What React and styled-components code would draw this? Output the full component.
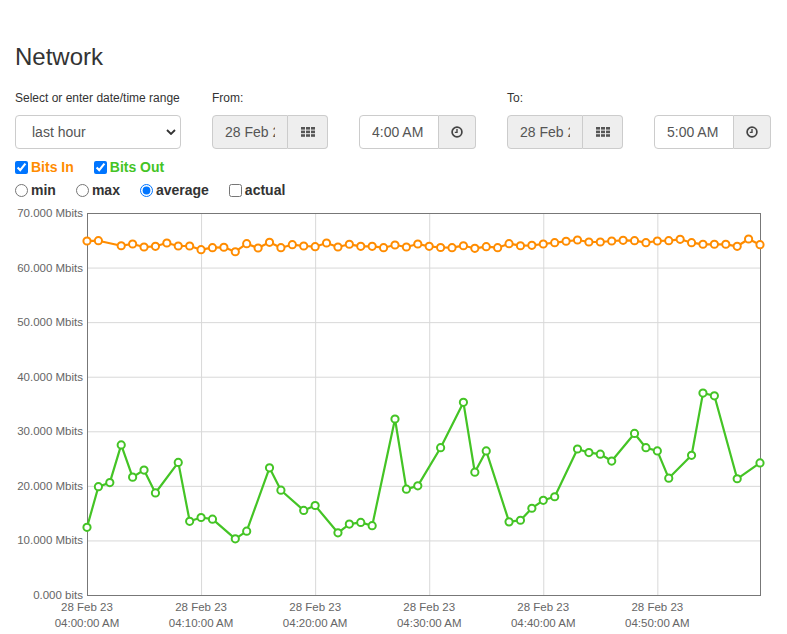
import React from 'react';
import styled, { createGlobalStyle } from 'styled-components';

const GlobalStyle = createGlobalStyle`
  html, body {
    margin: 0;
    padding: 0;
    overflow: hidden;
    background: #fff;
  }
  body {
    font-family: "Liberation Sans", Arial, sans-serif;
    font-size: 14px;
    color: #333;
  }
`;

const Page = styled.div`
  width: 787px;
  height: 634px;
  padding: 44px 15px 0;
  box-sizing: border-box;
`;

const Title = styled.h3`
  margin: 0;
  font-size: 24px;
  font-weight: 500;
  line-height: 26px;
  color: #333;
`;

const RangeGrid = styled.div`
  margin-top: 20px;
  display: grid;
  grid-template-columns: 166px 116px 117px 116px 117px;
  grid-template-rows: 17px 34px;
  column-gap: 31px;
  row-gap: 8px;
`;

const FieldLabel = styled.label`
  font-size: 12px;
  line-height: 17px;
  color: #333;
`;

const SelectWrap = styled.div`
  position: relative;
  width: 166px;
  height: 34px;
`;

const RangeSelect = styled.select`
  appearance: none;
  width: 100%;
  height: 34px;
  box-sizing: border-box;
  padding: 0 30px 0 16px;
  border: 1px solid #ccc;
  border-radius: 4px;
  background: #fff;
  font-family: "Liberation Sans", Arial, sans-serif;
  font-size: 14px;
  color: #555;
  outline: none;
`;

const Chevron = styled.svg`
  position: absolute;
  right: 5px;
  top: 14px;
  pointer-events: none;
`;

const InputGroup = styled.div`
  display: flex;
  height: 34px;
`;

const TextInput = styled.input`
  width: ${p => p.$w}px;
  height: 34px;
  box-sizing: border-box;
  padding: 0 12px;
  border: 1px solid #ccc;
  border-radius: 4px 0 0 4px;
  background: ${p => (p.readOnly ? '#eee' : '#fff')};
  font-family: "Liberation Sans", Arial, sans-serif;
  font-size: 14px;
  color: #555;
  outline: none;
`;

const Addon = styled.span`
  width: ${p => p.$w}px;
  height: 34px;
  box-sizing: border-box;
  display: flex;
  align-items: center;
  justify-content: center;
  border: 1px solid #ccc;
  border-left: 0;
  border-radius: 0 4px 4px 0;
  background: #eee;
  color: #555;
`;

const OptionRow = styled.div`
  display: flex;
  align-items: center;
  height: 20px;
  margin-top: ${p => p.$top}px;
`;

const Option = styled.label`
  display: flex;
  align-items: center;
  margin-right: 20px;
  font-size: 14px;
  font-weight: bold;
  line-height: 20px;
  color: ${p => p.$color || '#333'};

  input {
    width: 13px;
    height: 13px;
    margin: 0 3px 0 0;
  }
`;

const ChartSvg = styled.svg`
  display: block;
  margin: 2px 0 0 -15px;
  font-family: "Liberation Sans", Arial, sans-serif;
`;

const ORANGE = '#ff8c00';
const GREEN = '#44c425';

const bitsIn = [
  64.87, 64.93, null, 64.0, 64.32, 63.77, 63.9, 64.5, 63.95, 63.95,
  63.28, 63.64, 63.72, 62.9, 64.38, 63.59, 64.63, 63.64, 64.19, 63.95,
  63.83, 64.5, 63.77, 64.27, 63.9, 63.9, 63.64, 64.14, 63.77, 64.32,
  63.9, 63.68, 63.64, 64.0, 63.53, 63.83, 63.64, 64.38, 64.0, 64.08,
  64.32, 64.56, 64.82, 65.05, 64.69, 64.69, 64.87, 65.0, 64.93, 64.56,
  64.87, 64.93, 65.18, 64.56, 64.27, 64.27, 64.27, 63.9, 65.24, 64.2,
];

const bitsOut = [
  12.4, 19.85, 20.6, 27.5, 21.6, 22.9, 18.7, null, 24.3, 13.5,
  14.2, 13.9, null, 10.3, 11.7, null, 23.3, 19.2, null, 15.5,
  16.4, null, 11.4, 13.0, 13.3, 12.7, null, 32.25, 19.4, 20.0,
  null, 27.0, null, 35.3, 22.5, 26.4, null, 13.4, 13.7, 15.9,
  17.35, 18.0, null, 26.75, 26.1, 25.8, 24.55, null, 29.6, 27.0,
  26.4, 21.4, null, 25.6, 37.0, 36.5, null, 21.3, null, 24.2,
];

// chart geometry (svg coords, svg starts at page x=0)
const LEFT = 87;
const RIGHT = 760;
const TOP = 11;
const BOTTOM = 393;
const MAX = 70;
const STEP = (RIGHT - LEFT) / 59;

const xAt = i => LEFT + i * STEP;
const yAt = v => BOTTOM - (v * (BOTTOM - TOP)) / MAX;

const yTicks = [70, 60, 50, 40, 30, 20, 10, 0];
const xTicks = [
  ['04:00:00 AM', 0],
  ['04:10:00 AM', 10],
  ['04:20:00 AM', 20],
  ['04:30:00 AM', 30],
  ['04:40:00 AM', 40],
  ['04:50:00 AM', 50],
];

function Series({ data, color }) {
  const pts = data
    .map((v, i) => (v == null ? null : [xAt(i), yAt(v)]))
    .filter(Boolean);
  const d = pts.map((p, i) => `${i ? 'L' : 'M'}${p[0].toFixed(1)},${p[1].toFixed(1)}`).join(' ');
  return (
    <g>
      <path d={d} fill="none" stroke={color} strokeWidth="2.2" strokeLinejoin="round" />
      {pts.map((p, i) => (
        <circle key={i} cx={p[0]} cy={p[1]} r="3.6" fill="#fff" stroke={color} strokeWidth="2" />
      ))}
    </g>
  );
}

function Chart() {
  return (
    <ChartSvg width="787" height="430" viewBox="0 0 787 430">
      {yTicks.map(v => (
        <g key={v}>
          {v > 0 && v < MAX && (
            <line x1={LEFT} x2={RIGHT} y1={yAt(v) + 0.5} y2={yAt(v) + 0.5} stroke="#d8d8d8" />
          )}
          <text x="83" y={yAt(v) + 4} textAnchor="end" fontSize="11.5" fill="#666">
            {v === 0 ? '0.000 bits' : `${v}.000 Mbits`}
          </text>
        </g>
      ))}
      {xTicks.map(([time, m]) => (
        <g key={time}>
          {m > 0 && (
            <line x1={xAt(m) + 0.5} x2={xAt(m) + 0.5} y1={TOP} y2={BOTTOM} stroke="#d8d8d8" />
          )}
          <text x={xAt(m)} y="408.7" textAnchor="middle" fontSize="11.5" fill="#666">28 Feb 23</text>
          <text x={xAt(m)} y="425.3" textAnchor="middle" fontSize="11.5" fill="#666">{time}</text>
        </g>
      ))}
      <rect x={LEFT + 0.5} y={TOP + 0.5} width={RIGHT - LEFT} height={BOTTOM - TOP} fill="none" stroke="#777" />
      <Series data={bitsOut} color={GREEN} />
      <Series data={bitsIn} color={ORANGE} />
    </ChartSvg>
  );
}

const GridIcon = () => (
  <svg width="14" height="10" viewBox="0 0 14 10">
    {[0, 5, 10].map(x =>
      [0, 3.6, 7.2].map(y => <rect key={`${x}-${y}`} x={x} y={y} width="4" height="2.6" fill="#555" />)
    )}
  </svg>
);

const ClockIcon = () => (
  <svg width="12" height="12" viewBox="0 0 12 12">
    <circle cx="6" cy="6" r="4.9" fill="none" stroke="#444" strokeWidth="1.7" />
    <path d="M6 3v3.4H3.8" fill="none" stroke="#444" strokeWidth="1.4" />
  </svg>
);

function DateField({ value }) {
  return (
    <InputGroup>
      <TextInput $w={76} readOnly value={value} />
      <Addon $w={40}><GridIcon /></Addon>
    </InputGroup>
  );
}

function TimeField({ value }) {
  return (
    <InputGroup>
      <TextInput $w={80} defaultValue={value} />
      <Addon $w={37}><ClockIcon /></Addon>
    </InputGroup>
  );
}

export default function App() {
  return (
    <Page>
      <GlobalStyle />
      <Title>Network</Title>
      <RangeGrid>
        <FieldLabel>Select or enter date/time range</FieldLabel>
        <FieldLabel>From:</FieldLabel>
        <span />
        <FieldLabel>To:</FieldLabel>
        <span />
        <SelectWrap>
          <RangeSelect defaultValue="hour">
            <option value="hour">last hour</option>
            <option value="day">last day</option>
            <option value="week">last week</option>
          </RangeSelect>
          <Chevron width="10" height="6" viewBox="0 0 10 6">
            <path d="M1 1l4 4 4-4" fill="none" stroke="#333" strokeWidth="1.8" />
          </Chevron>
        </SelectWrap>
        <DateField value="28 Feb 2023" />
        <TimeField value="4:00 AM" />
        <DateField value="28 Feb 2023" />
        <TimeField value="5:00 AM" />
      </RangeGrid>
      <OptionRow $top={8}>
        <Option $color={ORANGE}><input type="checkbox" defaultChecked />Bits In</Option>
        <Option $color={GREEN}><input type="checkbox" defaultChecked />Bits Out</Option>
      </OptionRow>
      <OptionRow $top={3}>
        <Option><input type="radio" name="agg" />min</Option>
        <Option><input type="radio" name="agg" />max</Option>
        <Option><input type="radio" name="agg" defaultChecked />average</Option>
        <Option><input type="checkbox" />actual</Option>
      </OptionRow>
      <Chart />
    </Page>
  );
}
